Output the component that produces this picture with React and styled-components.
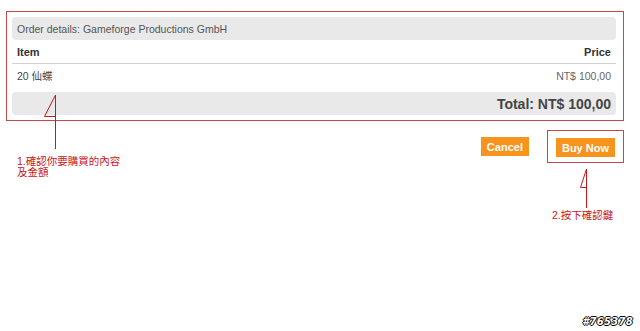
import React from "react";
import styled, { createGlobalStyle } from "styled-components";

const Global = createGlobalStyle`
  html, body { margin: 0; padding: 0; background: #fff; }
  body { font-family: "Liberation Sans", Arial, sans-serif; }
  * { box-sizing: border-box; }
`;

const Page = styled.div`
  position: relative;
  width: 640px;
  height: 331px;
  padding: 11px 0 0 6px;
  overflow: hidden;
`;

const OrderBox = styled.div`
  width: 618px;
  border: 1px solid #c4484a;
  padding: 5px 7px 5px 5px;
`;

const Header = styled.div`
  height: 23px;
  background: #e9e9e9;
  border-radius: 4px;
  padding: 0 5px;
  display: flex;
  align-items: center;
  font-size: 10.5px;
  color: #555;
`;

const Row = styled.div`
  display: flex;
  justify-content: space-between;
  align-items: ${(p) => (p.$head ? "center" : "flex-start")};
  height: ${(p) => (p.$head ? "24px" : "28px")};
  padding: ${(p) => (p.$head ? "1px 5px 0" : "5px 5px 0")};
  border-bottom: ${(p) => (p.$head ? "1px solid #d2d2d2" : "none")};
  font-size: ${(p) => (p.$head ? "11px" : "10.5px")};
  line-height: 14px;
  font-weight: ${(p) => (p.$head ? "bold" : "normal")};
  color: ${(p) => (p.$head ? "#333" : "#444")};
`;

const Cjk = styled.span`
  font-family: "Liberation Sans", "Noto Sans CJK TC", sans-serif;
`;

const Price = styled.span`
  color: ${(p) => (p.$muted ? "#666" : "inherit")};
`;

const TotalBar = styled.div`
  height: 23px;
  background: #e9e9e9;
  border-radius: 4px;
  padding: 0 5px;
  display: flex;
  justify-content: flex-end;
  align-items: center;
  font-size: 14px;
  font-weight: bold;
  color: #444;
`;

const Actions = styled.div`
  width: 618px;
  margin-top: 9px;
  display: flex;
  justify-content: flex-end;
  align-items: center;
  gap: 18px;
`;

const Highlight = styled.div`
  border: 1px solid #c4484a;
  padding: 7px 8px 5px 8px;
`;

const Button = styled.button`
  height: 19px;
  padding: 0 6px;
  border: none;
  background: #f7941d;
  color: #fff;
  font-family: "Liberation Sans", Arial, sans-serif;
  font-size: 11px;
  font-weight: bold;
  cursor: pointer;
  display: flex;
  align-items: center;
`;

const Overlay = styled.svg`
  position: absolute;
  left: 0;
  top: 0;
  pointer-events: none;
`;

const Note = styled.div`
  position: absolute;
  left: ${(p) => p.$x}px;
  top: ${(p) => p.$y}px;
  font-family: "Liberation Sans", "Noto Sans CJK TC", sans-serif;
  font-size: 10.5px;
  line-height: 11px;
  color: #c8161d;
  white-space: nowrap;
`;

const Watermark = styled.div`
  position: absolute;
  right: 7px;
  bottom: 4px;
  font-family: "DejaVu Sans", sans-serif;
  font-size: 10px;
  font-weight: bold;
  font-style: italic;
  color: #fff;
  text-shadow: 1px 0 #000, -1px 0 #000, 0 1px #000, 0 -1px #000;
  letter-spacing: 0.3px;
`;

export default function App() {
  return (
    <>
      <Global />
      <Page>
        <OrderBox>
          <Header>Order details: Gameforge Productions GmbH</Header>
          <Row $head>
            <span>Item</span>
            <span>Price</span>
          </Row>
          <Row>
            <Cjk>20 仙蝶</Cjk>
            <Price $muted>NT$ 100,00</Price>
          </Row>
          <TotalBar>Total: NT$ 100,00</TotalBar>
        </OrderBox>
        <Actions>
          <Button>Cancel</Button>
          <Highlight>
            <Button>Buy Now</Button>
          </Highlight>
        </Actions>

        <Overlay width="640" height="331" viewBox="0 0 640 331">
          <g stroke="#c8161d" strokeWidth="1" fill="none">
            <path d="M55.5 95 V149 M55.5 95 L44.5 116.5 H55.5" />
            <path d="M586.5 169 V208 M586.5 169 L580.5 187.5 H586.5" />
          </g>
        </Overlay>
        <Note $x={17} $y={156}>
          1.確認你要購買的內容
          <br />
          及金額
        </Note>
        <Note $x={552} $y={210}>2.按下確認鍵</Note>
        <Watermark>#765378</Watermark>
      </Page>
    </>
  );
}
